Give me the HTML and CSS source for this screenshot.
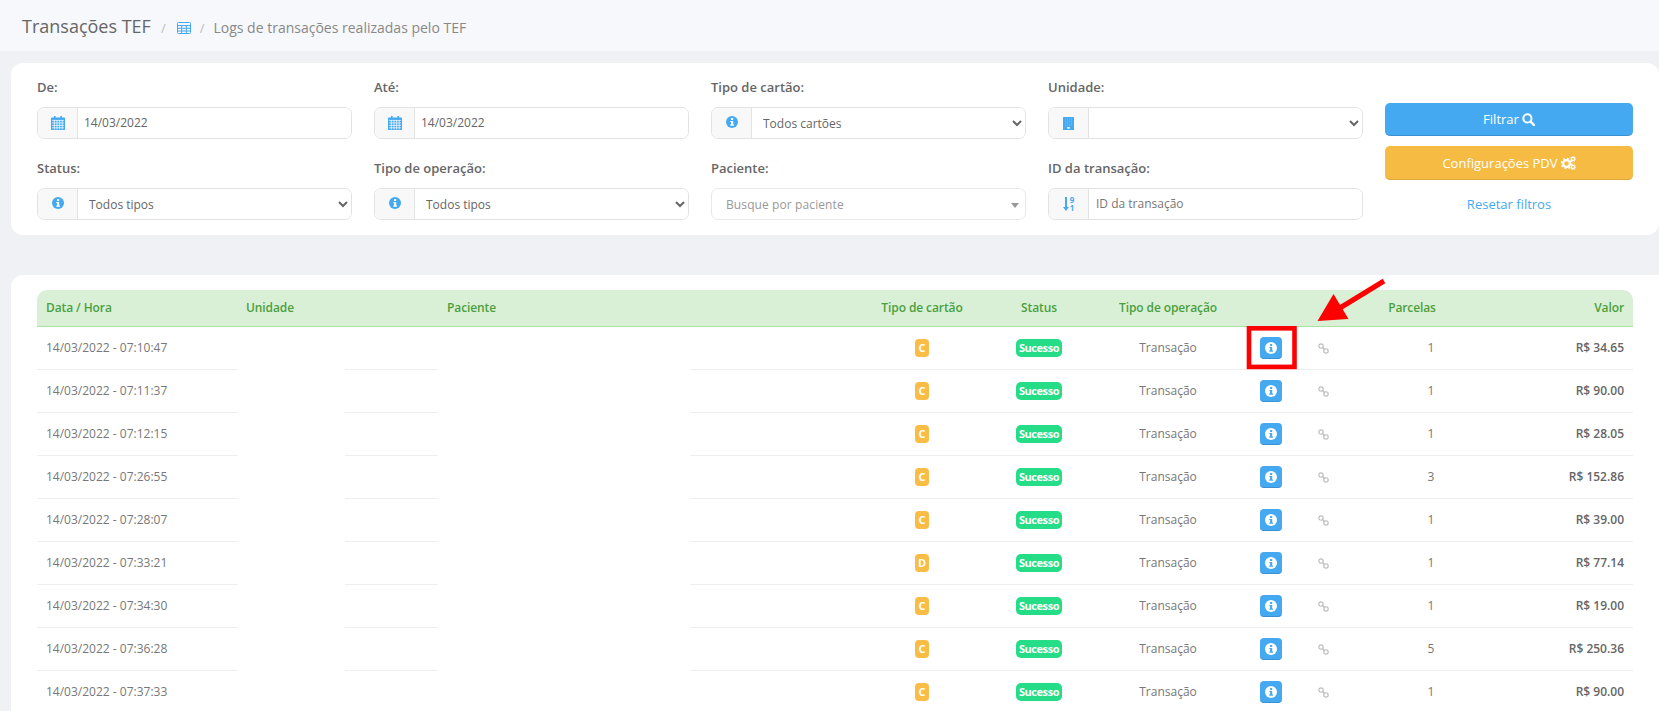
FILE: index.html
```html
<!DOCTYPE html>
<html lang="pt-BR">
<head>
<meta charset="utf-8">
<title>Transações TEF</title>
<link rel="stylesheet" href="styles.css">
</head>
<body>
<svg class="defs" width="0" height="0" aria-hidden="true">
  <symbol id="i-info" viewBox="0 0 12 12"><circle cx="6" cy="6" r="6" fill="#45a9f2"/><rect x="5" y="2" width="2.2" height="2" rx=".5" fill="#fff"/><path d="M4.3 5h2.9v3.6h.8v1.1H4.3V8.6h.8V6.1h-.8z" fill="#fff"/></symbol>
  <symbol id="i-info-w" viewBox="0 0 12 12"><circle cx="6" cy="6" r="6" fill="#fff"/><rect x="5" y="2" width="2.2" height="2" rx=".5" fill="#45a9f2"/><path d="M4.3 5h2.9v3.6h.8v1.1H4.3V8.6h.8V6.1h-.8z" fill="#45a9f2"/></symbol>
  <symbol id="i-cal" viewBox="0 0 14 14"><path fill="currentColor" d="M3 0h1.6v1.5h4.8V0H11v1.5h2.2a.8.8 0 0 1 .8.8v11a.8.8 0 0 1-.8.8H.8a.8.8 0 0 1-.8-.8v-11a.8.8 0 0 1 .8-.8H3z"/><path stroke="#fff" stroke-width=".7" fill="none" d="M1 4.4h12M1 6.9h12M1 9.4h12M1 11.8h12M3.4 4v9.5M6 4v9.5M8.6 4v9.5M11.2 4v9.5"/></symbol>
  <symbol id="i-grid" viewBox="0 0 14 12"><rect x=".5" y=".5" width="13" height="11" rx="1" fill="none" stroke="currentColor"/><path stroke="currentColor" fill="none" d="M0 3.6h14M0 6.3h14M0 9h14M4.7 3v9M9.3 3v9"/></symbol>
  <symbol id="i-build" viewBox="0 0 11 13"><rect width="11" height="13" rx=".6" fill="currentColor"/><path stroke="#fff" stroke-opacity=".45" stroke-width=".6" stroke-dasharray="1 1" d="M2 2h7M2 4h7M2 6h7M2 8h7"/><rect x="4.2" y="10" width="2.6" height="1.7" fill="#fff"/></symbol>
  <symbol id="i-search" viewBox="0 0 13 13"><circle cx="5.4" cy="5.4" r="4.1" fill="none" stroke="currentColor" stroke-width="2"/><path d="M8.6 8.6 12 12" stroke="currentColor" stroke-width="2.4" stroke-linecap="round"/></symbol>
  <symbol id="i-cogs" viewBox="0 0 15 14"><circle cx="5.5" cy="7.5" r="3.4" fill="none" stroke="currentColor" stroke-width="2.2"/><circle cx="5.5" cy="7.5" r="5" fill="none" stroke="currentColor" stroke-width="1.6" stroke-dasharray="1.9 2"/><circle cx="12" cy="3" r="1.6" fill="none" stroke="currentColor" stroke-width="1.3"/><circle cx="12" cy="11" r="1.6" fill="none" stroke="currentColor" stroke-width="1.3"/><circle cx="12" cy="3" r="2.8" fill="none" stroke="currentColor" stroke-width=".9" stroke-dasharray="1.2 1.2"/><circle cx="12" cy="11" r="2.8" fill="none" stroke="currentColor" stroke-width=".9" stroke-dasharray="1.2 1.2"/></symbol>
  <symbol id="i-link" viewBox="0 0 12 12"><circle cx="3.3" cy="3.3" r="2.4" fill="none" stroke="currentColor" stroke-width="1.3"/><circle cx="8.7" cy="8.7" r="2.4" fill="none" stroke="currentColor" stroke-width="1.3"/><path d="M4.4 4.4l3.2 3.2" stroke="currentColor" stroke-width="1.3"/></symbol>
  <symbol id="i-down" viewBox="0 0 6 14"><path fill="currentColor" d="M2 0h2v10h2l-3 4-3-4h2z"/></symbol>
</svg>

<header class="topbar">
  <h1 class="title">Transações TEF</h1>
  <span class="sep sep-first">/</span>
  <svg class="ic ic-grid"><use href="#i-grid"/></svg>
  <span class="sep">/</span>
  <span class="crumb">Logs de transações realizadas pelo TEF</span>
</header>

<section class="card filters">
  <div class="field">
    <label class="label">De:</label>
    <div class="group"><span class="addon"><svg class="ic ic-cal"><use href="#i-cal"/></svg></span><input class="control" value="14/03/2022"></div>
  </div>
  <div class="field">
    <label class="label">Até:</label>
    <div class="group"><span class="addon"><svg class="ic ic-cal"><use href="#i-cal"/></svg></span><input class="control" value="14/03/2022"></div>
  </div>
  <div class="field">
    <label class="label">Tipo de cartão:</label>
    <div class="group"><span class="addon"><svg class="ic ic-info"><use href="#i-info"/></svg></span><select class="control sel"><option>Todos cartões</option></select></div>
  </div>
  <div class="field">
    <label class="label">Unidade:</label>
    <div class="group"><span class="addon"><svg class="ic ic-build"><use href="#i-build"/></svg></span><select class="control sel"><option></option></select></div>
  </div>
  <div class="actions">
    <button class="btn btn-blue">Filtrar <svg class="ic ic-search"><use href="#i-search"/></svg></button>
    <button class="btn btn-yellow">Configurações PDV <svg class="ic ic-cogs"><use href="#i-cogs"/></svg></button>
    <a class="reset">Resetar filtros</a>
  </div>
  <div class="field">
    <label class="label">Status:</label>
    <div class="group"><span class="addon"><svg class="ic ic-info"><use href="#i-info"/></svg></span><select class="control sel"><option>Todos tipos</option></select></div>
  </div>
  <div class="field">
    <label class="label">Tipo de operação:</label>
    <div class="group"><span class="addon"><svg class="ic ic-info"><use href="#i-info"/></svg></span><select class="control sel"><option>Todos tipos</option></select></div>
  </div>
  <div class="field">
    <label class="label">Paciente:</label>
    <div class="group combo"><span class="placeholder">Busque por paciente</span><span class="caret"></span></div>
  </div>
  <div class="field">
    <label class="label">ID da transação:</label>
    <div class="group"><span class="addon"><span class="sort"><svg class="ic ic-down"><use href="#i-down"/></svg><span class="sort-nums">9<br>1</span></span></span><input class="control idinput" placeholder="ID da transação"></div>
  </div>
</section>

<section class="card results">
  <div class="tablewrap">
    <table class="grid">
      <colgroup><col class="c1"><col class="c2"><col class="c3"><col class="c4"><col class="c5"><col class="c6"><col class="c7"><col class="c8"><col class="c9"><col class="c10"></colgroup>
      <thead>
        <tr>
          <th>Data / Hora</th><th>Unidade</th><th>Paciente</th><th class="ctr">Tipo de cartão</th><th class="ctr">Status</th><th class="ctr">Tipo de operação</th><th></th><th class="ctr th-parc" colspan="2">Parcelas</th><th class="rgt">Valor</th>
        </tr>
      </thead>
      <tbody>
        <tr><td>14/03/2022 - 07:10:47</td><td></td><td></td><td class="ctr"><span class="tag">C</span></td><td class="ctr"><span class="ok">Sucesso</span></td><td class="ctr">Transação</td><td class="ctr td-info"><span class="infobtn"><svg class="ic ic-info-w"><use href="#i-info-w"/></svg></span></td><td class="ctr td-link"><svg class="ic ic-link"><use href="#i-link"/></svg></td><td class="ctr">1</td><td class="rgt val">R$ 34.65</td></tr>
        <tr><td>14/03/2022 - 07:11:37</td><td></td><td></td><td class="ctr"><span class="tag">C</span></td><td class="ctr"><span class="ok">Sucesso</span></td><td class="ctr">Transação</td><td class="ctr td-info"><span class="infobtn"><svg class="ic ic-info-w"><use href="#i-info-w"/></svg></span></td><td class="ctr td-link"><svg class="ic ic-link"><use href="#i-link"/></svg></td><td class="ctr">1</td><td class="rgt val">R$ 90.00</td></tr>
        <tr><td>14/03/2022 - 07:12:15</td><td></td><td></td><td class="ctr"><span class="tag">C</span></td><td class="ctr"><span class="ok">Sucesso</span></td><td class="ctr">Transação</td><td class="ctr td-info"><span class="infobtn"><svg class="ic ic-info-w"><use href="#i-info-w"/></svg></span></td><td class="ctr td-link"><svg class="ic ic-link"><use href="#i-link"/></svg></td><td class="ctr">1</td><td class="rgt val">R$ 28.05</td></tr>
        <tr><td>14/03/2022 - 07:26:55</td><td></td><td></td><td class="ctr"><span class="tag">C</span></td><td class="ctr"><span class="ok">Sucesso</span></td><td class="ctr">Transação</td><td class="ctr td-info"><span class="infobtn"><svg class="ic ic-info-w"><use href="#i-info-w"/></svg></span></td><td class="ctr td-link"><svg class="ic ic-link"><use href="#i-link"/></svg></td><td class="ctr">3</td><td class="rgt val">R$ 152.86</td></tr>
        <tr><td>14/03/2022 - 07:28:07</td><td></td><td></td><td class="ctr"><span class="tag">C</span></td><td class="ctr"><span class="ok">Sucesso</span></td><td class="ctr">Transação</td><td class="ctr td-info"><span class="infobtn"><svg class="ic ic-info-w"><use href="#i-info-w"/></svg></span></td><td class="ctr td-link"><svg class="ic ic-link"><use href="#i-link"/></svg></td><td class="ctr">1</td><td class="rgt val">R$ 39.00</td></tr>
        <tr><td>14/03/2022 - 07:33:21</td><td></td><td></td><td class="ctr"><span class="tag">D</span></td><td class="ctr"><span class="ok">Sucesso</span></td><td class="ctr">Transação</td><td class="ctr td-info"><span class="infobtn"><svg class="ic ic-info-w"><use href="#i-info-w"/></svg></span></td><td class="ctr td-link"><svg class="ic ic-link"><use href="#i-link"/></svg></td><td class="ctr">1</td><td class="rgt val">R$ 77.14</td></tr>
        <tr><td>14/03/2022 - 07:34:30</td><td></td><td></td><td class="ctr"><span class="tag">C</span></td><td class="ctr"><span class="ok">Sucesso</span></td><td class="ctr">Transação</td><td class="ctr td-info"><span class="infobtn"><svg class="ic ic-info-w"><use href="#i-info-w"/></svg></span></td><td class="ctr td-link"><svg class="ic ic-link"><use href="#i-link"/></svg></td><td class="ctr">1</td><td class="rgt val">R$ 19.00</td></tr>
        <tr><td>14/03/2022 - 07:36:28</td><td></td><td></td><td class="ctr"><span class="tag">C</span></td><td class="ctr"><span class="ok">Sucesso</span></td><td class="ctr">Transação</td><td class="ctr td-info"><span class="infobtn"><svg class="ic ic-info-w"><use href="#i-info-w"/></svg></span></td><td class="ctr td-link"><svg class="ic ic-link"><use href="#i-link"/></svg></td><td class="ctr">5</td><td class="rgt val">R$ 250.36</td></tr>
        <tr><td>14/03/2022 - 07:37:33</td><td></td><td></td><td class="ctr"><span class="tag">C</span></td><td class="ctr"><span class="ok">Sucesso</span></td><td class="ctr">Transação</td><td class="ctr td-info"><span class="infobtn"><svg class="ic ic-info-w"><use href="#i-info-w"/></svg></span></td><td class="ctr td-link"><svg class="ic ic-link"><use href="#i-link"/></svg></td><td class="ctr">1</td><td class="rgt val">R$ 90.00</td></tr>
      </tbody>
    </table>
    <div class="redact redact-a"></div>
    <div class="redact redact-b"></div>
  </div>
</section>

<svg class="annot" viewBox="0 0 1659 711" aria-hidden="true">
  <rect x="1249" y="328.3" width="45.5" height="38.6" fill="none" stroke="#f00" stroke-width="4.6"/>
  <path d="M1384 281 1335 311" stroke="#f00" stroke-width="5" fill="none"/>
  <path d="M1317.5 321 1333.5 294 1348.5 319z" fill="#f00"/>
</svg>
</body>
</html>
```
FILE: styles.css
```css
* { box-sizing: border-box; }
html, body { height: 100%; margin: 0; overflow: hidden; }
body {
  position: relative;
  background: #eff1f5;
  font-family: "Open Sans", "Liberation Sans", sans-serif;
  font-size: 13px;
  color: #666;
}
.defs { position: absolute; }
.ic { display: inline-block; color: #45a9f2; }

.topbar {
  height: 51px;
  background: #f7f8fb;
  display: flex;
  align-items: center;
  padding-left: 22px;
}
.title { margin: 0; font-size: 18px; font-weight: 400; color: #666; }
.sep { color: #bbb; font-size: 13px; margin: 4px 9px 0 8px; }
.sep-first { margin-left: 10px; margin-right: 8px; }
.ic-grid { width: 14px; height: 12px; margin: 5px 1px 0 3px; }
.crumb { font-size: 14px; color: #888; margin: 4px 0 0; }

.card { background: #fff; margin-left: 11px; border-radius: 12px 0 0 12px; }
.card.filters { border-radius: 12px; }
.filters {
  margin-top: 12px;
  padding: 14px 26px 15px;
  display: grid;
  grid-template-columns: 315px 315px 315px 315px 248px;
  column-gap: 22px;
  row-gap: 19px;
}
.label { display: block; height: 20px; line-height: 20px; font-weight: 600; color: #666; margin-bottom: 10px; }
.group {
  display: flex;
  height: 32px;
  border: 1px solid #e2e3e5;
  border-radius: 7px;
  overflow: hidden;
  background: #fff;
}
.addon {
  width: 40px;
  flex: none;
  background: #f8f8f9;
  border-right: 1px solid #e2e3e5;
  display: flex;
  align-items: center;
  justify-content: center;
}
.control {
  flex: 1;
  min-width: 0;
  border: 0;
  outline: 0;
  background: #fff;
  font-family: inherit;
  font-size: 12px;
  color: #666;
  padding: 0 6px 2px;
}
.sel { padding: 0 7px; }
.ic-cal { width: 14px; height: 14px; }
.ic-info { width: 12px; height: 12px; margin-top: -2px; }
.ic-build { width: 11px; height: 13px; }
.sort { display: flex; align-items: center; gap: 1px; color: #45a9f2; font-weight: 700; }
.ic-down { width: 6px; height: 14px; }
.sort-nums { font-size: 8px; line-height: 8px; }
.combo { align-items: center; padding: 0 6px 0 14px; justify-content: space-between; border-color: #e9e9ea; font-size: 12px; }
.placeholder { color: #999; letter-spacing: .1px; }
.caret { width: 0; height: 0; border-left: 4px solid transparent; border-right: 4px solid transparent; border-top: 5px solid #999; margin-top: 2px; }
.idinput { padding-left: 7px; }
.idinput::placeholder { color: #777; opacity: 1; }

.actions { grid-column: 5; grid-row: 1 / span 2; display: flex; flex-direction: column; padding-top: 26px; }
.btn {
  border: 0;
  border-radius: 5px;
  color: #fff;
  font-family: inherit;
  font-size: 13px;
  font-weight: 500;
  display: flex;
  align-items: center;
  justify-content: center;
  gap: 3px;
  width: 100%;
}
.btn .ic { color: #fff; }
.btn-blue { height: 33px; background: #45a9f2; border-bottom: 1px solid #3a92d4; }
.btn-yellow { height: 34px; background: #f5bb42; border-bottom: 1px solid #dca636; margin-top: 10px; }
.ic-search { width: 13px; height: 13px; }
.ic-cogs { width: 15px; height: 14px; }
.reset { color: #45a9f2; text-align: center; line-height: 20px; margin-top: 14px; }

.results { margin-top: 40px; padding: 15px 26px 0; height: 460px; }
.tablewrap { position: relative; }
.grid { width: 1596px; table-layout: fixed; border-collapse: separate; border-spacing: 0; font-size: 12px; }
.c1 { width: 200px; } .c2 { width: 201px; } .c3 { width: 434px; } .c4 { width: 100px; } .c5 { width: 134px; }
.c6 { width: 124px; } .c7 { width: 70px; } .c8 { width: 46px; } .c9 { width: 170px; } .c10 { width: 117px; }
th {
  height: 37px;
  padding: 0 9px 1px;
  background: #d9f0d6;
  border-bottom: 1px solid #a9e2a2;
  color: #4b9f3f;
  font-weight: 600;
  letter-spacing: -.1px;
  text-align: left;
  white-space: nowrap;
}
th:first-child { border-top-left-radius: 10px; }
th:last-child { border-top-right-radius: 10px; }
td {
  height: 43px;
  padding: 0 9px 2px;
  border-bottom: 1px solid #eeeeee;
  color: #777;
  white-space: nowrap;
}
th.ctr, td.ctr { text-align: center; padding-left: 0; padding-right: 0; }
th.rgt, td.rgt { text-align: right; }
.th-parc { padding-left: 8px !important; }
.val { font-weight: 600; color: #666; }
.tag, .ok {
  display: inline-block;
  height: 18px;
  line-height: 18px;
  margin-top: 2px;
  border-radius: 4px;
  color: #fff;
  font-weight: 700;
  font-size: 11px;
  vertical-align: middle;
}
.tag { width: 14px; background: #f9bc45; text-align: center; }
.ok { width: 46px; background: #25dc87; border-radius: 5px; letter-spacing: -.45px; text-align: center; }
.td-info { padding-left: 12px !important; }
.infobtn {
  display: inline-flex;
  width: 22px;
  height: 22px;
  margin-top: 2px;
  align-items: center;
  justify-content: center;
  background: #45a9f2;
  border-bottom: 1px solid #3a92d4;
  border-radius: 4px;
  vertical-align: middle;
}
.ic-info-w { width: 12px; height: 12px; }
.ic-link { width: 11px; height: 11px; color: #bdbdbd; vertical-align: middle; }

.redact { position: absolute; top: 37px; bottom: 0; background: #fff; }
.redact-a { left: 201px; width: 107px; }
.redact-b { left: 401px; width: 252px; }

.annot { position: absolute; left: 0; top: 0; width: 1659px; height: 711px; pointer-events: none; }
```
